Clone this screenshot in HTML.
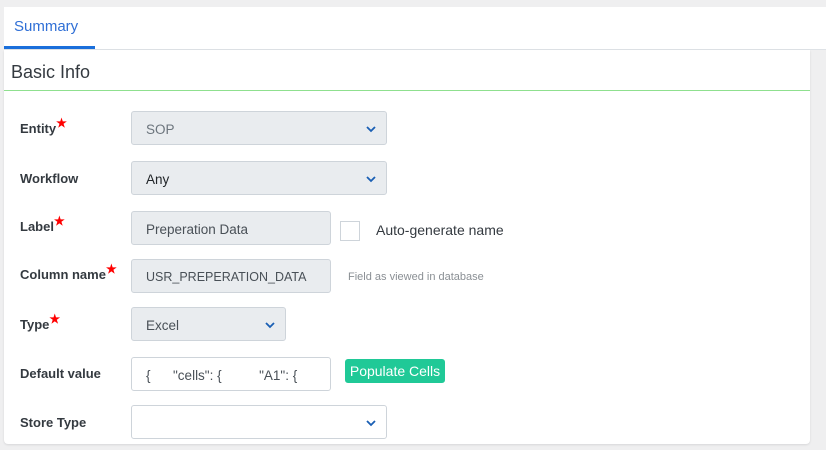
<!DOCTYPE html>
<html><head><style>
body{margin:0;width:826px;height:450px;background:#efeff0;font-family:"Liberation Sans",sans-serif;position:relative;overflow:hidden}
.tabbar{position:absolute;left:4px;top:7px;width:822px;height:42px;background:#fff;border-bottom:1px solid #dee2e6}
.tab{position:absolute;left:10px;top:11px;color:#2f6fd6;font-size:15px}
.ul{position:absolute;left:0;top:39px;width:91px;height:3px;background:#1a6fdb}
.card{position:absolute;left:4px;top:50px;width:806px;height:394px;background:#fff;border-radius:0 0 4px 4px;box-shadow:0 1px 2px rgba(0,0,0,.1)}
.hd{position:absolute;left:7px;top:12px;font-size:18px;color:#343a40}
.gl{position:absolute;left:0;top:40px;width:806px;height:1px;background:#8fe08f}
.lb{position:absolute;left:20px;font-size:13px;font-weight:bold;color:#343a40}
.st{color:#f00;font-size:12px;vertical-align:top;position:relative;top:-5px}
.f{position:absolute;left:131px;height:34px;box-sizing:border-box;border:1px solid #ced4da;border-radius:3px;background:#e9ecef;font-size:13.5px;color:#495057;padding:0 14px;line-height:35px}
.w{background:#fff}
.ch{position:absolute;right:10px;top:13px}
</style></head><body>
<div class="tabbar"><div class="tab">Summary</div><div class="ul"></div></div>
<div class="card"><div class="hd">Basic Info</div><div class="gl"></div></div>
<div class="lb" style="top:121px">Entity<span class="st">★</span></div>
<div class="f" style="top:111px;width:256px;color:#6c757d">SOP<svg class="ch" width="10" height="8" viewBox="0 0 10 8"><path d="M1 2l4 4 4-4" stroke="#1a5fb4" stroke-width="1.8" fill="none"/></svg></div>
<div class="lb" style="top:171px">Workflow</div>
<div class="f" style="top:161px;width:256px;color:#212529">Any<svg class="ch" width="10" height="8" viewBox="0 0 10 8"><path d="M1 2l4 4 4-4" stroke="#1a5fb4" stroke-width="1.8" fill="none"/></svg></div>
<div class="lb" style="top:219px">Label<span class="st">★</span></div>
<div class="f" style="top:211px;width:200px">Preperation Data</div>
<div style="position:absolute;left:340px;top:221px;width:20px;height:20px;border:1px solid #ced4da;box-sizing:border-box"></div>
<div style="position:absolute;left:376px;top:222px;font-size:14px;color:#343a40">Auto-generate name</div>
<div class="lb" style="top:267px">Column name<span class="st">★</span></div>
<div class="f" style="top:259px;width:200px;font-size:12.5px">USR_PREPERATION_DATA</div>
<div style="position:absolute;left:348px;top:271px;font-size:11px;color:#8a8f94">Field as viewed in database</div>
<div class="lb" style="top:317px">Type<span class="st">★</span></div>
<div class="f" style="top:307px;width:155px">Excel<svg class="ch" width="10" height="8" viewBox="0 0 10 8"><path d="M1 2l4 4 4-4" stroke="#1a5fb4" stroke-width="1.8" fill="none"/></svg></div>
<div class="lb" style="top:366px">Default value</div>
<div class="f w" style="top:357px;width:200px;white-space:pre">{      "cells": {          "A1": {</div>
<div style="position:absolute;left:345px;top:359px;width:100px;height:24px;background:#20c997;border-radius:3px;color:#fff;font-size:14px;line-height:25px;text-align:center">Populate Cells</div>
<div class="lb" style="top:415px">Store Type</div>
<div class="f w" style="top:405px;width:256px"><svg class="ch" width="10" height="8" viewBox="0 0 10 8"><path d="M1 2l4 4 4-4" stroke="#1a5fb4" stroke-width="1.8" fill="none"/></svg></div>
</body></html>
